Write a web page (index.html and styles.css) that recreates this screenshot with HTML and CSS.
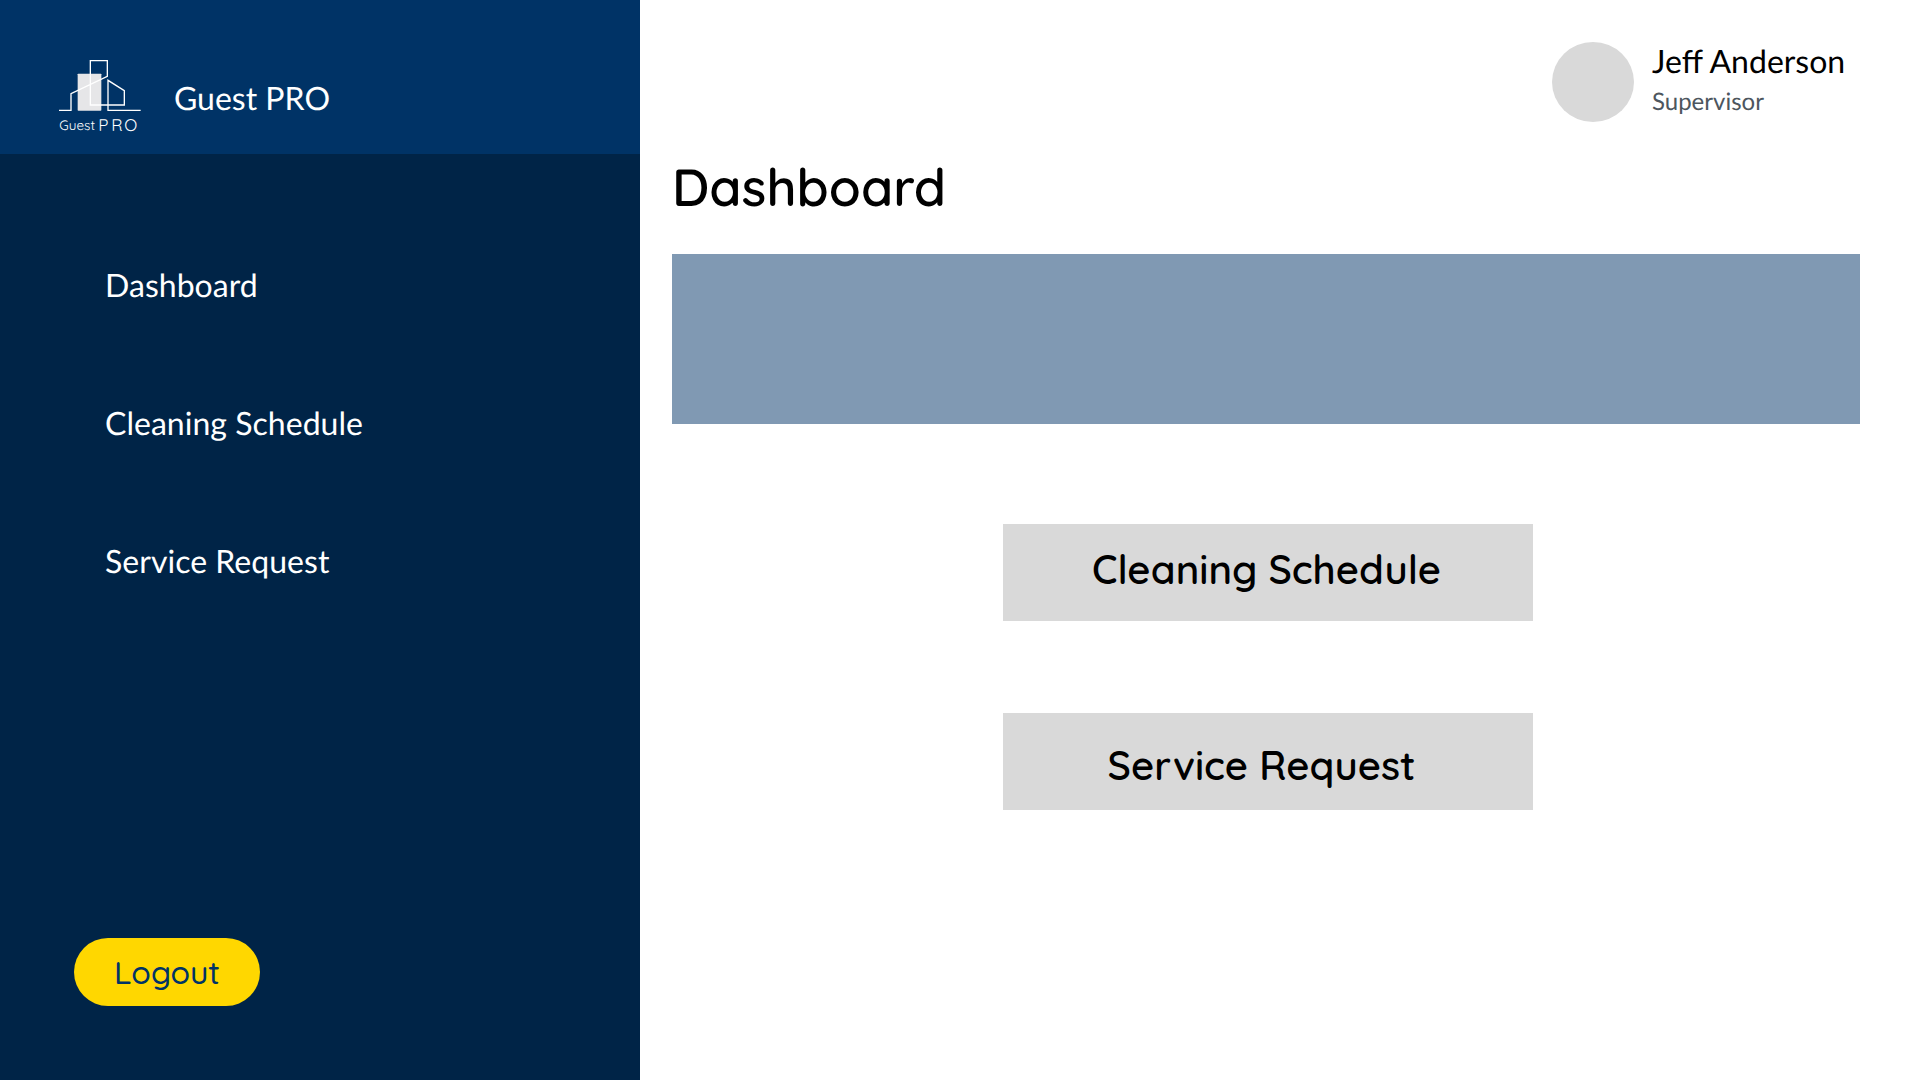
FILE: index.html
```html
<!DOCTYPE html>
<html lang="en">
<head>
<meta charset="utf-8">
<title>Guest PRO</title>
<link rel="stylesheet" href="styles.css">
</head>
<body>
<aside class="sidebar">
  <header class="brand">
    <svg class="logo" viewBox="0 0 300 270" role="img" aria-label="Guest PRO">
      <rect x="83" y="71" width="71" height="111" rx="2" fill="#e6e6e8"/>
      <g fill="none" stroke="#fff" stroke-width="4">
        <path d="M27 181H63V131L172 79V32H121V165H223V122L174 91V181H272"/>
      </g>
      <g class="logo-text">
        <text x="28" y="240" font-size="41" textLength="107" lengthAdjust="spacingAndGlyphs">Guest</text>
        <text x="145" y="243" font-size="51">P</text>
        <text x="184" y="243" font-size="51">R</text>
        <text x="223" y="243" font-size="51">O</text>
      </g>
    </svg>
    <span class="brand-name">Guest PRO</span>
  </header>
  <nav class="menu">
    <a>Dashboard</a>
    <a>Cleaning Schedule</a>
    <a>Service Request</a>
  </nav>
  <button class="logout"><span>Logout</span></button>
</aside>
<main class="main">
  <div class="profile">
    <div class="avatar"></div>
    <div class="person">
      <div class="name">Jeff Anderson</div>
      <div class="role">Supervisor</div>
    </div>
  </div>
  <h1 class="title">Dashboard</h1>
  <section class="banner"></section>
  <div class="actions">
    <button class="action cleaning">Cleaning Schedule</button>
    <button class="action service">Service Request</button>
  </div>
</main>
</body>
</html>
```
FILE: styles.css
```css
* { box-sizing: border-box; }
body {
  margin: 0;
  display: flex;
  width: 1920px;
  height: 1080px;
  overflow: hidden;
  background: #fff;
  color: #000;
  font-family: Lato, sans-serif;
  text-rendering: geometricPrecision;
}
button { border: 0; padding: 0; margin: 0; color: inherit; }
.sidebar {
  display: flex;
  flex-direction: column;
  align-items: flex-start;
  width: 640px;
  height: 1080px;
  background: #002447;
  color: #fff;
}
.brand {
  display: flex;
  align-items: flex-start;
  gap: 24px;
  width: 100%;
  height: 154px;
  padding: 50px 0 0 50px;
  background: #003366;
}
.logo { width: 100px; height: 90px; }
.logo-text { fill: #fff; font-family: Quicksand, Lato, sans-serif; font-weight: 400; }
.brand-name { margin-top: 29px; font-size: 32px; line-height: 38px; }
.menu {
  display: flex;
  flex-direction: column;
  gap: 100px;
  padding: 112px 0 0 105px;
  font-size: 32px;
  line-height: 38px;
  letter-spacing: 0.03px;
}
.logout {
  width: 186px;
  height: 68px;
  margin: auto 0 74px 74px;
  border-radius: 34px;
  background: #ffd700;
  color: #003366;
  font: 500 32px/40px Quicksand, Lato, sans-serif;
}
.main {
  display: flex;
  flex-direction: column;
  width: 1280px;
  padding: 42px 60px 0 32px;
}
.profile {
  display: flex;
  gap: 18px;
  height: 112px;
  padding-left: 880px;
}
.avatar { width: 82px; height: 80px; border-radius: 50%; background: #d9d9d9; }
.name { font-size: 32px; line-height: 38px; white-space: nowrap; }
.role { margin-top: 7px; font-size: 24px; line-height: 29px; color: #4d565e; }
.title {
  height: 100px;
  margin: 0;
  font: 600 52px/65px Quicksand, Lato, sans-serif;
}
.banner { height: 170px; background: #8099b3; }
.actions {
  display: flex;
  flex-direction: column;
  gap: 92px;
  width: 530px;
  margin: 100px 0 0 331px;
}
.action {
  height: 97px;
  background: #d9d9d9;
  font: 600 40px/50px Quicksand, Lato, sans-serif;
  white-space: nowrap;
}
.cleaning { padding: 0 3px 8px 0; }
.service { padding: 6px 13px 0 0; }
```
